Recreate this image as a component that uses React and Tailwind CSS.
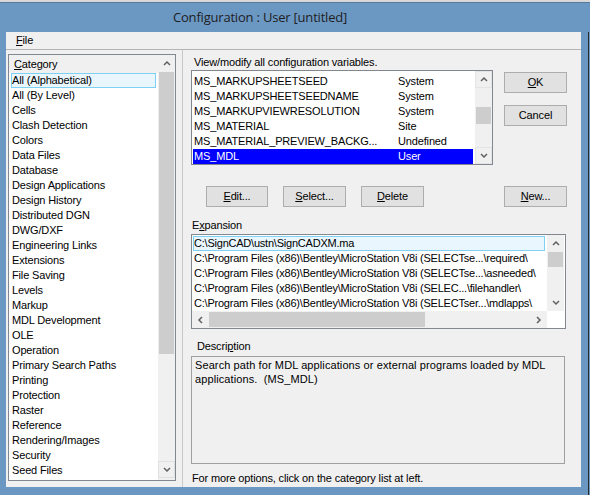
import React from 'react';

const categories = [
  'All (Alphabetical)',
  'All (By Level)',
  'Cells',
  'Clash Detection',
  'Colors',
  'Data Files',
  'Database',
  'Design Applications',
  'Design History',
  'Distributed DGN',
  'DWG/DXF',
  'Engineering Links',
  'Extensions',
  'File Saving',
  'Levels',
  'Markup',
  'MDL Development',
  'OLE',
  'Operation',
  'Primary Search Paths',
  'Printing',
  'Protection',
  'Raster',
  'Reference',
  'Rendering/Images',
  'Security',
  'Seed Files',
];

const variables = [
  ['MS_MARKUPSHEETSEED', 'System'],
  ['MS_MARKUPSHEETSEEDNAME', 'System'],
  ['MS_MARKUPVIEWRESOLUTION', 'System'],
  ['MS_MATERIAL', 'Site'],
  ['MS_MATERIAL_PREVIEW_BACKG...', 'Undefined'],
  ['MS_MDL', 'User'],
];

const expansion = [
  'C:\\SignCAD\\ustn\\SignCADXM.ma',
  'C:\\Program Files (x86)\\Bentley\\MicroStation V8i (SELECTse...\\required\\',
  'C:\\Program Files (x86)\\Bentley\\MicroStation V8i (SELECTse...\\asneeded\\',
  'C:\\Program Files (x86)\\Bentley\\MicroStation V8i (SELEC...\\filehandler\\',
  'C:\\Program Files (x86)\\Bentley\\MicroStation V8i (SELECTser...\\mdlapps\\',
];

function Chevron({ dir }) {
  const pts = {
    up: '1,5 4,2 7,5',
    down: '1,2 4,5 7,2',
    left: '5,1 2,4 5,7',
    right: '2,1 5,4 2,7',
  }[dir];
  return (
    <svg width="8" height="8" viewBox="0 0 8 8">
      <polyline points={pts} fill="none" stroke="#606060" strokeWidth="1.5" />
    </svg>
  );
}

function Btn({ children, className = '' }) {
  return (
    <div
      className={`h-[21px] flex items-center justify-center border border-[#adadad] bg-[#e1e1e1] ${className}`}
    >
      {children}
    </div>
  );
}

const U = ({ children }) => <span className="underline underline-offset-[1px]">{children}</span>;

export default function App() {
  return (
    <div className="w-[590px] h-[495px] bg-[#6b97c3] flex flex-col overflow-hidden text-[11px] leading-[15px] tracking-[-0.15px] text-black font-['Liberation_Sans',Arial,sans-serif]">
      {/* strip of the desktop behind */}
      <div className="h-[2px] bg-[#d8d8d8] shrink-0" />

      {/* title bar */}
      <div className="h-[30px] shrink-0 flex items-center border-t border-[#55799f] pl-[173px] text-[13px] tracking-[-0.2px] text-[#1e1e1e] font-['Open_Sans',sans-serif]">
        Configuration : User [untitled]
      </div>

      <div className="flex flex-1">
        <div className="ml-[6px] w-[575px] h-[455px] bg-[#f0f0f0] flex flex-col">
          {/* menu */}
          <div className="h-[18px] shrink-0 flex items-center pl-[10px] border-b border-[#b4b4b4]">
            <span>
              <U>F</U>ile
            </span>
          </div>

          <div className="flex flex-1">
            {/* category list */}
            <div className="w-[177px] pl-[2px] pt-[4px] border-r border-[#c8c8c8]">
              <div className="w-[168px] h-[427px] border border-[#828790] bg-white flex">
                <div className="w-[149px] flex flex-col">
                  <div className="h-[18px] bg-[#f0f0f0] flex items-center pl-[5px]">
                    <span>
                      <U>C</U>ategory
                    </span>
                  </div>
                  {categories.map((c, i) => (
                    <div
                      key={c}
                      className={`h-[15px] flex items-center ml-[2px] w-[145px] ${
                        i === 0 ? 'border border-[#7fd0f5] bg-[#eaf6fd] pl-0' : 'pl-[1px]'
                      }`}
                    >
                      {c}
                    </div>
                  ))}
                </div>
                <div className="w-[17px] flex flex-col bg-[#f0f0f0]">
                  <div className="h-[17px] flex items-center justify-center">
                    <Chevron dir="up" />
                  </div>
                  <div className="h-[282px] mx-[1px] bg-[#cdcdcd]" />
                  <div className="flex-1" />
                  <div className="h-[17px] mb-[2px] flex items-center justify-center border border-[#e0e0e0]">
                    <Chevron dir="down" />
                  </div>
                </div>
              </div>
            </div>

            {/* right panel */}
            <div className="flex-1 pl-[8px] flex flex-col">
              <div className="flex">
                <div className="w-[302px]">
                  <div className="mt-[5px] pl-[3px]">View/modify all configuration variables.</div>
                  <div className="h-[95px] border border-[#828790] bg-white flex">
                    <div className="w-[283px] pt-[3px]">
                      {variables.map(([name, lvl], i) => (
                        <div
                          key={name}
                          className={`h-[15px] flex items-center ml-[1px] w-[280px] pl-[1px] ${
                            i === 5 ? 'bg-[#0000ff] text-white' : ''
                          }`}
                        >
                          <span className="w-[204px]">{name}</span>
                          <span>{lvl}</span>
                        </div>
                      ))}
                    </div>
                    <div className="w-[17px] flex flex-col bg-[#f0f0f0]">
                      <div className="h-[17px] flex items-center justify-center border border-[#e4e4e4]">
                        <Chevron dir="up" />
                      </div>
                      <div className="h-[19px]" />
                      <div className="h-[17px] mx-[1px] bg-[#cdcdcd]" />
                      <div className="flex-1" />
                      <div className="h-[17px] flex items-center justify-center border border-[#e4e4e4]">
                        <Chevron dir="down" />
                      </div>
                    </div>
                  </div>
                </div>
                <div className="ml-[11px] pt-[22px] flex flex-col gap-[12px]">
                  <Btn className="w-[63px]">
                    <span>
                      <U>O</U>K
                    </span>
                  </Btn>
                  <Btn className="w-[63px]">Cancel</Btn>
                </div>
              </div>

              {/* action buttons */}
              <div className="mt-[21px] flex">
                <Btn className="ml-[15px] w-[62px]">
                  <span>
                    <U>E</U>dit...
                  </span>
                </Btn>
                <Btn className="ml-[15px] w-[63px]">
                  <span>
                    <U>S</U>elect...
                  </span>
                </Btn>
                <Btn className="ml-[15px] w-[63px]">
                  <span>
                    <U>D</U>elete
                  </span>
                </Btn>
                <Btn className="ml-[80px] w-[63px]">
                  <span>
                    <U>N</U>ew...
                  </span>
                </Btn>
              </div>

              {/* expansion */}
              <div className="mt-[11px] pl-[1px]">
                E<U>x</U>pansion
              </div>
              <div className="mt-[1px] w-[375px] h-[95px] border border-[#828790] bg-white flex flex-col">
                <div className="flex flex-1">
                  <div className="w-[355px] pt-[1px] tracking-[-0.22px]">
                    {expansion.map((e, i) => (
                      <div
                        key={e}
                        className={`h-[15px] flex items-center ml-[1px] w-[352px] whitespace-nowrap overflow-hidden ${
                          i === 0 ? 'border border-[#7fd0f5] bg-[#eaf6fd]' : 'pl-[1px]'
                        }`}
                      >
                        {e}
                      </div>
                    ))}
                  </div>
                  <div className="w-[17px] flex flex-col bg-[#f0f0f0]">
                    <div className="h-[17px] flex items-center justify-center">
                      <Chevron dir="up" />
                    </div>
                    <div className="h-[15px] mx-[1px] bg-[#cdcdcd]" />
                    <div className="flex-1" />
                    <div className="h-[17px] flex items-center justify-center">
                      <Chevron dir="down" />
                    </div>
                  </div>
                </div>
                <div className="h-[17px] flex">
                  <div className="w-[355px] flex items-center bg-[#f0f0f0]">
                    <div className="w-[17px] flex items-center justify-center">
                      <Chevron dir="left" />
                    </div>
                    <div className="w-[216px] h-[15px] bg-[#cdcdcd]" />
                    <div className="flex-1" />
                    <div className="w-[17px] flex items-center justify-center">
                      <Chevron dir="right" />
                    </div>
                  </div>
                  <div className="w-[17px] bg-white" />
                </div>
              </div>

              {/* description */}
              <div className="mt-[10px] pl-[6px]">
                Descri<U>p</U>tion
              </div>
              <div className="mt-[2px] w-[374px] h-[108px] border border-[#a0a0a0] px-[3px] pt-[1px] leading-[14px] tracking-[0.1px]">
                Search path for MDL applications or external programs loaded by MDL
                <br />
                applications.&nbsp; (MS_MDL)
              </div>
              <div className="mt-[7px] pl-[1px] leading-[14px]">
                For more options, click on the category list at left.
              </div>
            </div>
          </div>
        </div>
        <div className="ml-[7px] w-[1px] bg-[#2a2a2a]" />
      </div>
    </div>
  );
}
